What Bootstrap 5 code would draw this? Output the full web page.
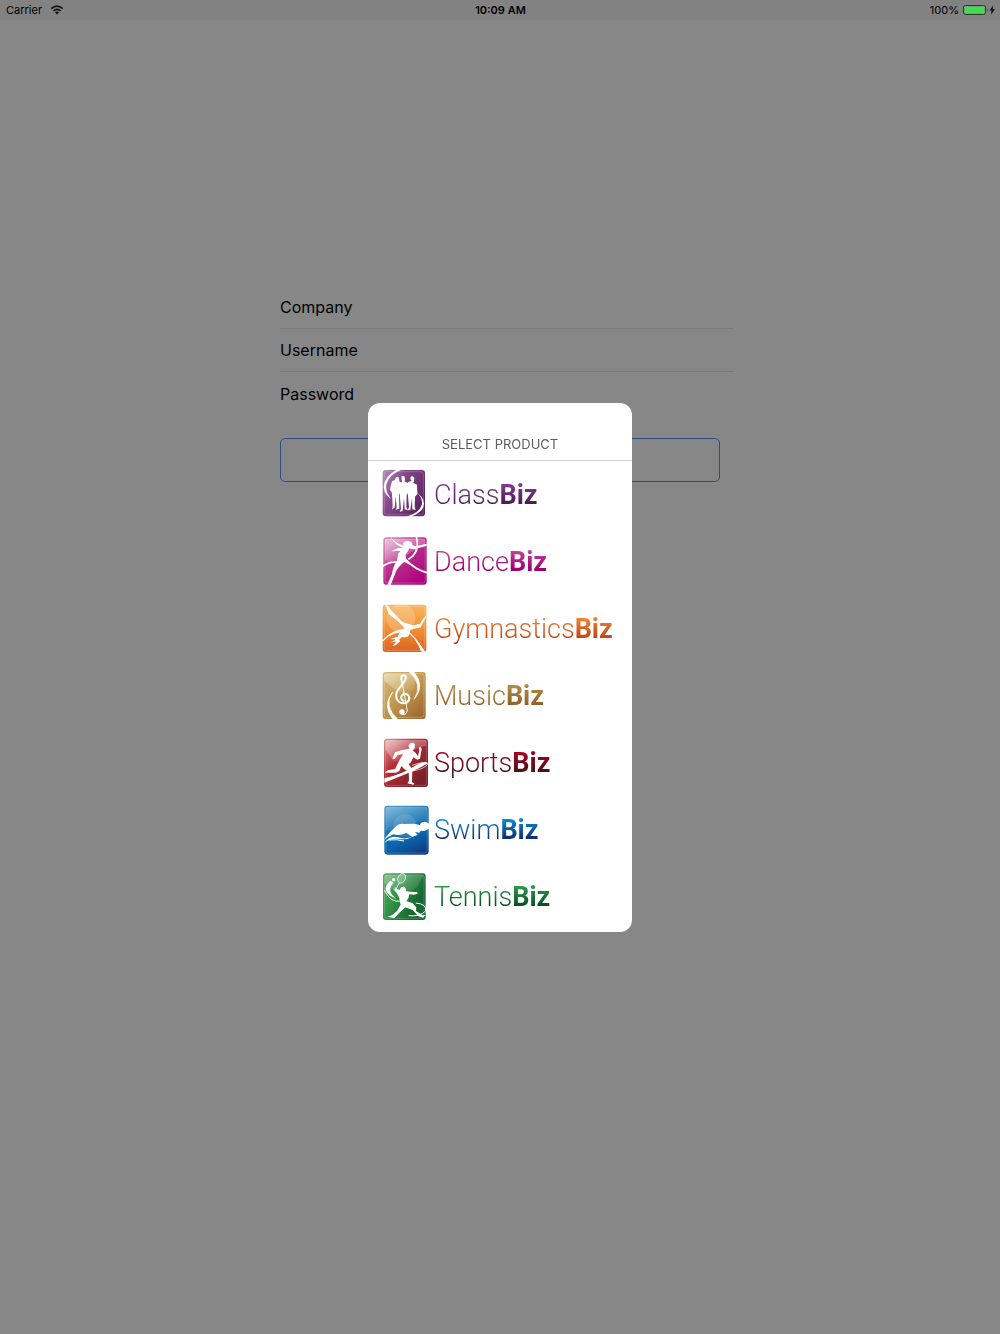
<!DOCTYPE html>
<html lang="en">
<head>
<meta charset="utf-8">
<meta name="viewport" content="width=device-width, initial-scale=1">
<title>Select product</title>
<link href="https://cdn.jsdelivr.net/npm/bootstrap@5.3.0/dist/css/bootstrap.min.css" rel="stylesheet">
<style>
body{background:#878787;color:#000;font-family:Inter,"Liberation Sans",sans-serif;overflow:hidden}
.status-bar{height:20px;background:#828282;font-size:11px;line-height:20px;padding:0 5px 0 6px}
.status-bar>div{flex:1 1 0}
.login-form{width:440px;max-width:90%;padding-top:266px;font-size:16px}
.fields{margin-right:-14px}
.field-row{height:43px;border-bottom:1px solid #7a7a7a}
.field-row:last-child{border-bottom:0}
.field-row input{background:transparent;border:0;outline:0;min-width:0}
.sign-in{height:44px;border:1px solid #284f8c;border-radius:5px;margin-top:23px}
.sheet-wrap{z-index:10}
.sheet{width:264px;border-radius:12px;background:#fff;overflow:hidden}
.sheet-title{height:58px;padding-top:29px;font-size:13px;line-height:24px;font-weight:400;color:#5e5e60;border-bottom:1px solid #d2d2d4}
.product-list{padding-bottom:2px}
.product{height:67px;padding:3px 0 4px 8px;gap:4px;border:0;background:none;text-align:left}
.product svg{width:54px;height:60px;flex:none}
.brand{font-family:Roboto,"Liberation Sans",sans-serif;font-size:27px;line-height:32px;font-weight:300;padding-top:2px;color:transparent;-webkit-background-clip:text;background-clip:text}
.brand b{font-weight:700}
.brand-class{background-image:linear-gradient(#8a3c98 15%,#401b4b 85%)}
.brand-dance{background-image:linear-gradient(#c5489e 15%,#9e0071 75%)}
.brand-gym{background-image:linear-gradient(#f58b35 15%,#bd3d16 85%)}
.brand-music{background-image:linear-gradient(#b8914b 15%,#8d5b25 85%)}
.brand-sport{background-image:linear-gradient(#b00020 15%,#401317 85%)}
.brand-swim{background-image:linear-gradient(#0a96dd 15%,#102263 85%)}
.brand-tennis{background-image:linear-gradient(#30a44a 15%,#05451f 85%)}
</style>
<script src="https://cdn.jsdelivr.net/npm/bootstrap@5.3.0/dist/js/bootstrap.bundle.min.js"></script>
</head>
<body>
<header class="status-bar d-flex align-items-center">
  <div class="d-flex align-items-center gap-1">Carrier
    <svg class="ms-1" width="14" height="10" viewBox="0 0 14 10" fill="none" stroke="#111" stroke-width="1.7"><path d="M1.3 3.7Q7-1.3 12.700 3.700M3.400 5.900Q7 2.800 10.600 5.900"/><path d="M4.900 7.300Q7 5.700 9.100 7.300L7 9.500Z" fill="#111" stroke="none"/></svg>
  </div>
  <div class="text-center fw-semibold">10:09 AM</div>
  <div class="d-flex align-items-center justify-content-end">100%
    <svg class="ms-1" width="32" height="10" viewBox="0 0 32 10"><rect x=".5" y=".5" width="22" height="9" rx="2" fill="#828282" stroke="#333"/><rect x="1.500" y="1.500" width="20" height="7" rx="1" fill="#43db54"/><path d="M24 3.500q1.500 1.500 0 3z" fill="#222"/><path d="M30 .5 26.500 5.600h2L28 9.500l4-5.300h-2.300z" fill="#111"/></svg>
  </div>
</header>

<main>
  <form class="login-form mx-auto">
    <div class="fields">
      <div class="field-row d-flex align-items-center gap-3"><label for="company">Company</label><input id="company" class="flex-grow-1" type="text"></div>
      <div class="field-row d-flex align-items-center gap-3"><label for="username">Username</label><input id="username" class="flex-grow-1" type="text"></div>
      <div class="field-row d-flex align-items-center gap-3"><label for="password">Password</label><input id="password" class="flex-grow-1" type="password"></div>
    </div>
    <button type="button" class="sign-in btn w-100 d-block" aria-label="Sign in"></button>
  </form>
</main>

<div class="sheet-wrap position-fixed top-0 start-0 w-100 h-100 d-flex align-items-center justify-content-center">
  <section class="sheet" role="dialog" aria-labelledby="sheet-title">
    <h2 id="sheet-title" class="sheet-title text-center m-0">SELECT PRODUCT</h2>
    <div class="product-list d-flex flex-column">

      <button type="button" class="product d-flex align-items-center">
        <svg viewBox="0 0 162 180" aria-hidden="true">
          <defs>
            <linearGradient id="g1" x2="1" y2=".6"><stop stop-color="#b58abb"/><stop offset=".45" stop-color="#834589"/><stop offset="1" stop-color="#612663"/></linearGradient>
            <linearGradient id="shine" x2=".7" y2="1"><stop stop-color="#fff" stop-opacity=".5"/><stop offset="1" stop-color="#fff" stop-opacity=".06"/></linearGradient>
          </defs>
          <rect x="20" y="18" width="127" height="139" rx="9" fill="url(#g1)"/>
          <rect x="25" y="23" width="117" height="129" rx="7" fill="none" stroke="#fff" stroke-opacity=".28" stroke-width="2"/>
          <path d="M60 18Q27 36 23 68Q25 92 45 104Q27 82 31 62Q36 34 75 18Z" fill="#fff"/>
          <path d="M119 83Q143 101 137 124Q128 150 89 158H106Q143 143 144 119Q143 98 119 83Z" fill="#fff"/>
          <g fill="#fff">
            <path d="M60 40q6-4 9 2l1 10 7 5-2 24-6 10 1 43-11 3 3-6-3-35-3 35-8 5 2-9-2-36-2-9-5-4 7-26 9-5z"/>
            <path d="M76 37q6-4 10 1l1 9-2 5 12 6 1 27-6 7-1 38 5 9-10-3-2-35-4 40-9 2 4-9-4-43-5-7 4-25 8-5z"/>
            <path d="M104 38q8-3 11 4l-1 10-3 4 12 6 1 28-7 8-1 31 3 9-10-2-1-34-5 36-8 1 4-10-4-42-3-10 4-22 11-5-4-5z"/>
          </g>
        </svg>
        <span class="brand brand-class">Class<b>Biz</b></span>
      </button>

      <button type="button" class="product d-flex align-items-center">
        <svg viewBox="0 0 162 180" aria-hidden="true">
          <defs><linearGradient id="g2" x2=".8" y2="1"><stop stop-color="#d996bf"/><stop offset=".45" stop-color="#bd328f"/><stop offset="1" stop-color="#aa007a"/></linearGradient></defs>
          <rect x="22" y="19" width="130" height="142" rx="9" fill="url(#g2)"/>
          <path d="M27 24H147V48Q112 52 87 78T27 87Z" fill="url(#shine)"/>
          <rect x="27" y="24" width="120" height="132" rx="7" fill="none" stroke="#fff" stroke-opacity=".3" stroke-width="2"/>
          <path d="M42 15Q59 39 83 43L81 37Q86 29 98 30Q111 33 109 43L119 46 152 38V44L113 55 100 52 94 64 88 72 91 84 101 96Q113 105 127 108L102 101 84 93 74 103Q61 114 57 130L43 164 34 162 48 128Q52 105 62 91L67 67 74 59 45 61 66 51 81 50Q56 43 42 15Z" fill="#fff"/>
          <path d="M20 106Q40 91 64 94M89 86Q117 116 153 125M121 17Q133 64 97 85" fill="none" stroke="#fff" stroke-width="5"/>
          <path d="M120 45Q124 73 99 84" fill="none" stroke="#fff" stroke-width="2"/>
        </svg>
        <span class="brand brand-dance">Dance<b>Biz</b></span>
      </button>

      <button type="button" class="product d-flex align-items-center">
        <svg viewBox="0 0 162 180" aria-hidden="true">
          <defs><linearGradient id="g3" x2="0" y2="1"><stop stop-color="#fbb45c"/><stop offset=".5" stop-color="#f29237"/><stop offset="1" stop-color="#dc6120"/></linearGradient></defs>
          <rect x="20" y="20" width="131" height="142" rx="9" fill="url(#g3)"/>
          <circle cx="75" cy="61" r="43" fill="#fff" opacity=".2"/>
          <rect x="25" y="25" width="121" height="132" rx="7" fill="none" stroke="#fff" stroke-opacity=".3" stroke-width="2"/>
          <path d="M27 17Q40 24 45 37L65 57Q73 69 87 75L112 82 131 78 143 60 152 50 147 64 134 88 114 92 103 96 102 102Q101 115 91 117Q83 120 80 116L70 123 72 130 60 141 49 144 61 131 45 133 58 126 56 124 43 123 65 116 69 106Q75 97 87 94L80 84 62 66 38 48Z" fill="#fff"/>
          <path d="M20 129Q43 98 89 93L99 101Q53 95 20 129M97 101Q124 124 147 163L137 160Q119 118 97 101" fill="#fff" stroke="#fff" stroke-width="3"/>
        </svg>
        <span class="brand brand-gym">Gymnastics<b>Biz</b></span>
      </button>

      <button type="button" class="product d-flex align-items-center">
        <svg viewBox="0 -3 162 180" aria-hidden="true">
          <defs><linearGradient id="g4" x2=".8" y2="1"><stop stop-color="#d7bd78"/><stop offset=".5" stop-color="#c29b50"/><stop offset="1" stop-color="#a06a2e"/></linearGradient></defs>
          <rect x="20" y="18" width="129" height="141" rx="9" fill="url(#g4)"/>
          <path d="M25 23H109Q125 45 110 74Q86 91 59 72L25 45Z" fill="url(#shine)"/>
          <rect x="25" y="23" width="119" height="131" rx="7" fill="none" stroke="#fff" stroke-opacity=".38" stroke-width="2"/>
          <path d="M96 15Q144 54 114 100Q149 60 113 17ZM50 78Q21 119 66 161H52Q17 119 50 78Z" fill="#fff" stroke="#fff" stroke-width="2"/>
          <g fill="none" stroke="#fff" stroke-linecap="round"><path stroke-width="6" d="M79 51C70 29 83 23 89 31C95 46 64 64 61 83C57 107 78 117 93 109C106 99 99 83 86 84C72 86 73 104 83 104"/><path stroke-width="3" d="M79 51 92 123Q98 147 80 146"/></g><circle cx="78" cy="138" r="8" fill="#fff"/>
        </svg>
        <span class="brand brand-music">Music<b>Biz</b></span>
      </button>

      <button type="button" class="product d-flex align-items-center">
        <svg viewBox="0 -3 162 180" aria-hidden="true">
          <defs><linearGradient id="g5" x2=".9" y2=".8"><stop stop-color="#df9894"/><stop offset=".43" stop-color="#b52c38"/><stop offset="1" stop-color="#792027"/></linearGradient></defs>
          <rect x="24" y="17" width="132" height="145" rx="9" fill="url(#g5)"/>
          <path d="M29 22H151V38Q102 48 88 77L55 87 29 51Z" fill="url(#shine)"/>
          <rect x="29" y="22" width="122" height="135" rx="7" fill="none" stroke="#fff" stroke-opacity=".3" stroke-width="2"/>
          <path d="M102 31Q113 26 117 34L115 48 109 52 119 60 126 69 130 51 128 45 133 41 137 47 132 77 124 80 112 73 104 89 98 94 109 109 108 147 115 152 112 155 94 151 99 143 98 117 84 107 76 99 70 114 60 119 26 119 35 112 57 108 69 84 81 63 65 66 56 78 49 77 57 58 78 51 101 47 97 39Z" fill="#fff"/>
          <path d="M25 136Q80 123 111 102T156 91Q135 104 111 114Q67 133 25 149Z" fill="#fff"/>
          <path d="M108 97Q151 83 156 91 151 106 107 115" fill="none" stroke="#fff" stroke-width="2"/>
        </svg>
        <span class="brand brand-sport">Sports<b>Biz</b></span>
      </button>

      <button type="button" class="product d-flex align-items-center">
        <svg viewBox="0 -3 162 180" aria-hidden="true">
          <defs><linearGradient id="g6" x1=".3" x2=".7" y2="1"><stop stop-color="#4694c7"/><stop offset=".35" stop-color="#1674b1"/><stop offset=".65" stop-color="#0868ae"/><stop offset="1" stop-color="#103d86"/></linearGradient></defs>
          <rect x="25" y="17" width="133" height="147" rx="10" fill="url(#g6)"/>
          <path d="M30 22H153V62Q126 60 105 80Q77 95 30 91Z" fill="url(#shine)" opacity=".6"/>
          <circle cx="87" cy="78" r="35" fill="#fff" opacity=".12"/>
          <rect x="30" y="22" width="123" height="137" rx="8" fill="none" stroke="#fff" stroke-opacity=".25" stroke-width="2"/>
          <path d="M24 119 43 95 62 77Q72 69 84 72L115 71 131 75Q137 63 151 66L159 71V86L145 93 135 92 130 98 117 96 125 104 109 111 92 99Q67 109 52 103L35 112Z" fill="#fff"/>
          <path d="M25 128Q43 104 66 112T112 109Q94 121 70 117T25 128" fill="#fff"/>
          <path d="M39 120Q64 117 84 123" fill="none" stroke="#fff" stroke-width="3"/>
        </svg>
        <span class="brand brand-swim">Swim<b>Biz</b></span>
      </button>

      <button type="button" class="product d-flex align-items-center">
        <svg viewBox="0 -3 162 180" aria-hidden="true">
          <defs><linearGradient id="g7" x2=".9" y2=".5"><stop stop-color="#69aa6d"/><stop offset=".4" stop-color="#34994a"/><stop offset="1" stop-color="#176631"/></linearGradient></defs>
          <rect x="21" y="19" width="128" height="140" rx="9" fill="url(#g7)"/>
          <path d="M26 24H144L123 61 77 91 26 48Z" fill="url(#shine)" opacity=".6"/>
          <rect x="26" y="24" width="118" height="130" rx="7" fill="none" stroke="#fff" stroke-opacity=".28" stroke-width="2"/>
          <circle cx="53" cy="38" r="5" fill="#fff"/>
          <path d="M43 41Q7 73 62 96Q29 73 52 47Z" fill="#fff"/>
          <path d="M25 69Q44 109 75 102M119 108Q153 111 149 132Q131 150 98 146" fill="none" stroke="#fff" stroke-width="3"/>
          <ellipse cx="77" cy="34" rx="11" ry="15" transform="rotate(28 77 34)" fill="#fff" fill-opacity=".2" stroke="#fff" stroke-width="2"/>
          <path d="M70 47 60 67" stroke="#fff" stroke-width="3"/>
          <path d="M57 61 65 67 72 69Q72 60 82 59Q91 61 90 72L100 74 123 75 125 80 113 83 100 82 97 94 91 102 110 109 121 121 120 132 140 145 148 144 141 152 127 148 110 129 88 121 72 136 55 153 34 149 48 145 63 132 74 113 69 91 62 78 55 69Z" fill="#fff"/>
        </svg>
        <span class="brand brand-tennis">Tennis<b>Biz</b></span>
      </button>
    </div>
  </section>
</div>
</body>
</html>
